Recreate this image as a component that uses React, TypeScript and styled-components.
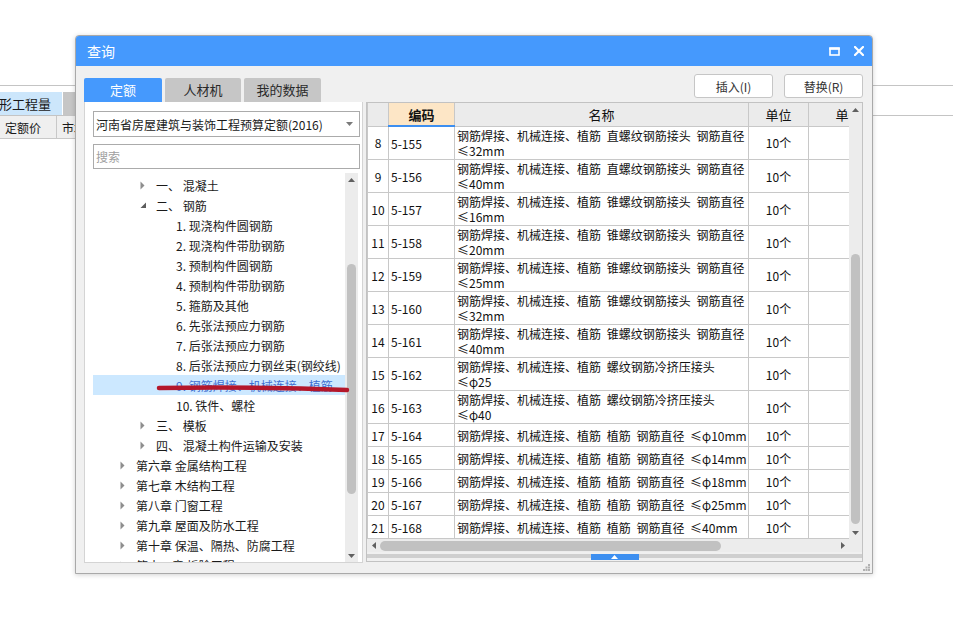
import React from 'react'
import styled, { createGlobalStyle } from 'styled-components'

const GlobalStyle = createGlobalStyle`
    html, body {
        margin: 0;
        padding: 0;
        background: #fff;
    }
    body {
        font-family: "Noto Sans CJK SC", "Noto Sans", sans-serif;
        color: #1a1a1a;
    }
`

const Page = styled.div`
    position: relative;
    width: 953px;
    height: 627px;
    overflow: hidden;
    background: #fff;
`

// app behind the dialog
const Backdrop = styled.div`
    padding-top: 85px;
`
const BackTabBar = styled.div`
    display: flex;
    padding-top: 6px;
    border-top: 1px solid #c4c4c4;
    border-bottom: 1px solid #c4c4c4;
`
const BackTab = styled.div<{ $active?: boolean }>`
    width: ${p => (p.$active ? '62px' : '40px')};
    height: 23px;
    margin-right: 1px;
    background: ${p => (p.$active ? '#cce6fb' : '#c6c6c6')};
    font-size: 13px;
    line-height: 23px;
    white-space: nowrap;
    overflow: hidden;
    text-indent: -1px;
`
const BackRow = styled.div`
    display: flex;
`
const BackCell = styled.div<{ $w: number }>`
    width: ${p => p.$w}px;
    height: 23px;
    flex-shrink: 0;
    background: #efefef;
    border-right: 1px solid #c8c8c8;
    border-bottom: 1px solid #c8c8c8;
    font-size: 12px;
    line-height: 23px;
    padding-left: 5px;
    box-sizing: border-box;
    white-space: nowrap;
    overflow: hidden;
`

// dialog window
const Dialog = styled.div`
    position: absolute;
    left: 75px;
    top: 35px;
    width: 798px;
    height: 539px;
    box-sizing: border-box;
    display: flex;
    flex-direction: column;
    background: #f0f0f0;
    border: 1px solid #a9a9a9;
    border-radius: 4px 4px 0 0;
    box-shadow: 0 1px 5px rgba(0, 0, 0, 0.18);
    overflow: hidden;
`
const TitleBar = styled.div`
    height: 30px;
    flex-shrink: 0;
    display: flex;
    align-items: center;
    justify-content: space-between;
    padding: 0 8px 0 11px;
    background: #4599fd;
    color: #fff;
    font-size: 14px;
`
const TitleButtons = styled.div`
    display: flex;
    align-items: center;
    gap: 14px;
`
const Body = styled.div`
    flex: 1;
    display: flex;
    flex-direction: column;
    padding: 0 9px 10px 8px;
    min-height: 0;
`
const Toolbar = styled.div`
    height: 36px;
    flex-shrink: 0;
    display: flex;
    justify-content: space-between;
`
const Tabs = styled.div`
    display: flex;
    align-items: flex-end;
    gap: 3px;
`
const Tab = styled.div<{ $active?: boolean; $w: number }>`
    width: ${p => p.$w}px;
    height: 24px;
    border-radius: 2px 2px 0 0;
    background: ${p => (p.$active ? '#4599fd' : '#c6c6c6')};
    color: ${p => (p.$active ? '#fff' : '#2a2a2a')};
    font-size: 13px;
    line-height: 24px;
    text-align: center;
`
const Actions = styled.div`
    display: flex;
    gap: 11px;
    padding-top: 8px;
`
const ActionButton = styled.button`
    width: 79px;
    height: 24px;
    padding: 0;
    background: #fff;
    border: 1px solid #c6c6c6;
    border-radius: 3px;
    font-family: "Noto Sans CJK SC", sans-serif;
    font-size: 12px;
    color: #333;
`
const Content = styled.div`
    flex: 1;
    display: flex;
    gap: 3px;
    min-height: 0;
    min-width: 0;
`

// left side
const LeftPanel = styled.div`
    width: 279px;
    height: 461px;
    flex-shrink: 0;
    box-sizing: border-box;
    display: flex;
    flex-direction: column;
    background: #fff;
    border: 1px solid #d4d4d4;
    border-top: none;
    padding: 9px 2px 0 8px;
`
const Select = styled.div`
    height: 26px;
    box-sizing: border-box;
    display: flex;
    align-items: center;
    justify-content: space-between;
    border: 1px solid #ababab;
    padding: 0 6px 0 2px;
    font-size: 12px;
    color: #1a1a1a;
`
const Search = styled.div`
    height: 25px;
    margin-top: 7px;
    box-sizing: border-box;
    border: 1px solid #ababab;
    padding-left: 2px;
    font-size: 12px;
    line-height: 23px;
    color: #a0a0a0;
`
const TreeArea = styled.div`
    position: relative;
    flex: 1;
    display: flex;
    margin-top: 4px;
    margin-right: 2px;
    min-height: 0;
    overflow: hidden;
`
const TreeList = styled.div`
    flex: 1;
    padding-top: 2px;
`
const TreeRow = styled.div<{ $level: number; $selected?: boolean }>`
    height: 20px;
    display: flex;
    align-items: center;
    padding-left: ${p => 27 + (p.$level - 1) * 20}px;
    background: ${p => (p.$selected ? '#cce8ff' : 'transparent')};
    color: ${p => (p.$selected ? '#3f6fd1' : '#1a1a1a')};
    font-size: 12px;
    white-space: nowrap;
`
const Toggle = styled.span`
    width: 16px;
    flex-shrink: 0;
    display: flex;
    align-items: center;
`
const Mark = styled.svg`
    position: absolute;
    left: 0;
    top: 0;
    pointer-events: none;
`

const ScrollTrack = styled.div<{ $horizontal?: boolean }>`
    flex-shrink: 0;
    display: flex;
    flex-direction: ${p => (p.$horizontal ? 'row' : 'column')};
    align-items: center;
    ${p => (p.$horizontal ? 'height: 13px; flex: 1; min-width: 0;' : 'width: 13px;')}
    background: #ececec;
`
const ScrollArrow = styled.div<{ $size: number }>`
    width: ${p => p.$size}px;
    height: ${p => p.$size}px;
    flex-shrink: 0;
    display: flex;
    align-items: center;
    justify-content: center;
`
const ScrollThumb = styled.div<{ $horizontal?: boolean; $start: number; $length: number }>`
    flex-shrink: 0;
    background: #c1c1c1;
    border-radius: 5px;
    ${p =>
        p.$horizontal
            ? `height: 10px; width: ${p.$length}px; margin-left: ${p.$start}px;`
            : `width: 9px; height: ${p.$length}px; margin-top: ${p.$start}px;`}
`
const Filler = styled.div`
    flex: 1;
`

// right side
const RightPanel = styled.div`
    flex: 1;
    min-width: 0;
    height: 460px;
    box-sizing: border-box;
    display: flex;
    flex-direction: column;
    border: 1px solid #c2c2c2;
    background: #f0f0f0;
`
const GridArea = styled.div`
    height: 436px;
    display: flex;
    background: #fff;
`
const GridClip = styled.div`
    flex: 1;
    min-width: 0;
    overflow: hidden;
`
const Grid = styled.table`
    width: 521px;
    table-layout: fixed;
    border-collapse: collapse;
    font-size: 12px;
    color: #111;
`
const HeadCell = styled.th<{ $sorted?: boolean }>`
    height: 22px;
    padding: 0;
    font-size: 13px;
    font-weight: ${p => (p.$sorted ? 700 : 400)};
    background: ${p => (p.$sorted ? '#fde6c6' : '#ebebeb')};
    border: 1px solid #c8c8c8;
    border-top: none;
    border-bottom: ${p => (p.$sorted ? '2px solid #3d8ff0' : '1px solid #c8c8c8')};
    text-align: center;
    white-space: nowrap;
    overflow: hidden;
`
const Cell = styled.td<{ $align?: string; $h: number }>`
    height: ${p => p.$h - 1}px;
    padding: 0 2px;
    border: 1px solid #c8c8c8;
    text-align: ${p => p.$align || 'left'};
    vertical-align: middle;
    line-height: 15px;
    white-space: nowrap;
    overflow: hidden;
    word-spacing: 3px;
`
const HScrollRow = styled.div`
    height: 13px;
    display: flex;
`
const Corner = styled.div`
    width: 13px;
    flex-shrink: 0;
    background: #ececec;
`
const Splitter = styled.div`
    height: 9px;
    display: flex;
    justify-content: center;
    align-items: flex-end;
    background: linear-gradient(#f0f0f0 0, #f0f0f0 2px, #cfcfcf 2px, #cfcfcf 6px, #f0f0f0 6px);
`
const SplitHandle = styled.div`
    width: 48px;
    height: 6px;
    margin-bottom: 1px;
    display: flex;
    justify-content: center;
    align-items: center;
    background: #3d8ff0;
`
const Grip = styled.svg`
    position: absolute;
    right: 2px;
    bottom: 2px;
`

const Tri = ({ dir, color = '#606060' }: { dir: 'up' | 'down' | 'left' | 'right'; color?: string }) => {
    const pts = {
        up: '0,4 3.5,0 7,4',
        down: '0,0 7,0 3.5,4',
        left: '4,0 4,7 0,3.5',
        right: '0,0 4,3.5 0,7',
    }[dir]
    const w = dir === 'up' || dir === 'down' ? 7 : 4
    const h = dir === 'up' || dir === 'down' ? 4 : 7
    return (
        <svg width={w} height={h} viewBox={`0 0 ${w} ${h}`}>
            <polygon points={pts} fill={color} />
        </svg>
    )
}

const Caret = ({ open }: { open?: boolean }) =>
    open ? (
        <svg width="7" height="7" viewBox="0 0 7 7">
            <polygon points="6,0.5 6,6 0.5,6" fill="#5c5c5c" />
        </svg>
    ) : (
        <svg width="5" height="9" viewBox="0 0 5 9">
            <polygon points="0.5,0.5 4.5,4.5 0.5,8.5" fill="#8e8e8e" />
        </svg>
    )

type Node = { level: number; text: string; toggle?: 'open' | 'closed'; selected?: boolean }

const tree: Node[] = [
    { level: 2, text: '一、 混凝土', toggle: 'closed' },
    { level: 2, text: '二、 钢筋', toggle: 'open' },
    { level: 3, text: '1. 现浇构件圆钢筋' },
    { level: 3, text: '2. 现浇构件带肋钢筋' },
    { level: 3, text: '3. 预制构件圆钢筋' },
    { level: 3, text: '4. 预制构件带肋钢筋' },
    { level: 3, text: '5. 箍筋及其他' },
    { level: 3, text: '6. 先张法预应力钢筋' },
    { level: 3, text: '7. 后张法预应力钢筋' },
    { level: 3, text: '8. 后张法预应力钢丝束(钢绞线)' },
    { level: 3, text: '9. 钢筋焊接、机械连接、植筋', selected: true },
    { level: 3, text: '10. 铁件、螺栓' },
    { level: 2, text: '三、 模板', toggle: 'closed' },
    { level: 2, text: '四、 混凝土构件运输及安装', toggle: 'closed' },
    { level: 1, text: '第六章 金属结构工程', toggle: 'closed' },
    { level: 1, text: '第七章 木结构工程', toggle: 'closed' },
    { level: 1, text: '第八章 门窗工程', toggle: 'closed' },
    { level: 1, text: '第九章 屋面及防水工程', toggle: 'closed' },
    { level: 1, text: '第十章 保温、隔热、防腐工程', toggle: 'closed' },
    { level: 1, text: '第十一章 拆除工程', toggle: 'closed' },
]

const base = '钢筋焊接、机械连接、植筋'
const zhi = `${base} 直螺纹钢筋接头 钢筋直径`
const zhui = `${base} 锥螺纹钢筋接头 钢筋直径`
const ji = `${base} 螺纹钢筋冷挤压接头`
const plant = `${base} 植筋 钢筋直径`

type Item = { n: number; code: string; name: string; more?: string }

const items: Item[] = [
    { n: 8, code: '5-155', name: zhi, more: '≤32mm' },
    { n: 9, code: '5-156', name: zhi, more: '≤40mm' },
    { n: 10, code: '5-157', name: zhui, more: '≤16mm' },
    { n: 11, code: '5-158', name: zhui, more: '≤20mm' },
    { n: 12, code: '5-159', name: zhui, more: '≤25mm' },
    { n: 13, code: '5-160', name: zhui, more: '≤32mm' },
    { n: 14, code: '5-161', name: zhui, more: '≤40mm' },
    { n: 15, code: '5-162', name: ji, more: '≤φ25' },
    { n: 16, code: '5-163', name: ji, more: '≤φ40' },
    { n: 17, code: '5-164', name: `${plant} ≤φ10mm` },
    { n: 18, code: '5-165', name: `${plant} ≤φ14mm` },
    { n: 19, code: '5-166', name: `${plant} ≤φ18mm` },
    { n: 20, code: '5-167', name: `${plant} ≤φ25mm` },
    { n: 21, code: '5-168', name: `${plant} ≤40mm` },
]

const App = () => {
    return (
        <Page>
            <GlobalStyle />
            <Backdrop>
                <BackTabBar>
                    <BackTab $active>形工程量</BackTab>
                    <BackTab />
                </BackTabBar>
                <BackRow>
                    <BackCell $w={57}>定额价</BackCell>
                    <BackCell $w={40}>市场价</BackCell>
                </BackRow>
            </Backdrop>

            <Dialog>
                <TitleBar>
                    <span>查询</span>
                    <TitleButtons>
                        <svg width="11" height="9" viewBox="0 0 11 9">
                            <rect x="1" y="1.5" width="9" height="6.5" fill="none" stroke="#fff" strokeWidth="1.6" />
                            <rect x="0.2" y="0.2" width="10.6" height="2.6" fill="#fff" />
                        </svg>
                        <svg width="10" height="10" viewBox="0 0 10 10">
                            <path d="M1 1 L9 9 M9 1 L1 9" stroke="#fff" strokeWidth="2.2" strokeLinecap="square" />
                        </svg>
                    </TitleButtons>
                </TitleBar>

                <Body>
                    <Toolbar>
                        <Tabs>
                            <Tab $active $w={78}>定额</Tab>
                            <Tab $w={76}>人材机</Tab>
                            <Tab $w={77}>我的数据</Tab>
                        </Tabs>
                        <Actions>
                            <ActionButton>插入(I)</ActionButton>
                            <ActionButton>替换(R)</ActionButton>
                        </Actions>
                    </Toolbar>

                    <Content>
                        <LeftPanel>
                            <Select>
                                <span>河南省房屋建筑与装饰工程预算定额(2016)</span>
                                <Tri dir="down" color="#7a7a7a" />
                            </Select>
                            <Search>搜索</Search>
                            <TreeArea>
                                <TreeList>
                                    {tree.map((node, i) => (
                                        <TreeRow key={i} $level={node.level} $selected={node.selected}>
                                            <Toggle>{node.toggle && <Caret open={node.toggle === 'open'} />}</Toggle>
                                            {node.text}
                                        </TreeRow>
                                    ))}
                                </TreeList>
                                <ScrollTrack>
                                    <ScrollArrow $size={13}>
                                        <Tri dir="up" />
                                    </ScrollArrow>
                                    <ScrollThumb $start={78} $length={230} />
                                    <Filler />
                                    <ScrollArrow $size={13}>
                                        <Tri dir="down" />
                                    </ScrollArrow>
                                </ScrollTrack>
                                <Mark width="270" height="230" viewBox="0 0 270 230">
                                    <path
                                        d="M66 215 Q160 213.5 254 217"
                                        fill="none"
                                        stroke="#b4172b"
                                        strokeWidth="4.5"
                                        strokeLinecap="round"
                                    />
                                </Mark>
                            </TreeArea>
                        </LeftPanel>

                        <RightPanel>
                            <GridArea>
                                <GridClip>
                                    <Grid>
                                        <colgroup>
                                            <col style={{ width: 21 }} />
                                            <col style={{ width: 66 }} />
                                            <col style={{ width: 294 }} />
                                            <col style={{ width: 60 }} />
                                            <col style={{ width: 80 }} />
                                        </colgroup>
                                        <thead>
                                            <tr>
                                                <HeadCell />
                                                <HeadCell $sorted>编码</HeadCell>
                                                <HeadCell>名称</HeadCell>
                                                <HeadCell>单位</HeadCell>
                                                <HeadCell>单价</HeadCell>
                                            </tr>
                                        </thead>
                                        <tbody>
                                            {items.map(item => {
                                                const h = item.more ? 33 : 23
                                                return (
                                                    <tr key={item.n}>
                                                        <Cell $h={h} $align="center">{item.n}</Cell>
                                                        <Cell $h={h}>{item.code}</Cell>
                                                        <Cell $h={h}>
                                                            {item.name}
                                                            {item.more && (
                                                                <>
                                                                    <br />
                                                                    {item.more}
                                                                </>
                                                            )}
                                                        </Cell>
                                                        <Cell $h={h} $align="center">10个</Cell>
                                                        <Cell $h={h} />
                                                    </tr>
                                                )
                                            })}
                                        </tbody>
                                    </Grid>
                                </GridClip>
                                <ScrollTrack>
                                    <ScrollArrow $size={13}>
                                        <Tri dir="up" />
                                    </ScrollArrow>
                                    <ScrollThumb $start={138} $length={270} />
                                    <Filler />
                                    <ScrollArrow $size={13}>
                                        <Tri dir="down" />
                                    </ScrollArrow>
                                </ScrollTrack>
                            </GridArea>
                            <HScrollRow>
                                <ScrollTrack $horizontal>
                                    <ScrollArrow $size={13}>
                                        <Tri dir="left" />
                                    </ScrollArrow>
                                    <ScrollThumb $horizontal $start={0} $length={341} />
                                    <Filler />
                                    <ScrollArrow $size={13}>
                                        <Tri dir="right" />
                                    </ScrollArrow>
                                </ScrollTrack>
                                <Corner />
                            </HScrollRow>
                            <Splitter>
                                <SplitHandle>
                                    <Tri dir="up" color="#fff" />
                                </SplitHandle>
                            </Splitter>
                        </RightPanel>
                    </Content>
                </Body>
                <Grip width="7" height="7" viewBox="0 0 7 7">
                    <rect x="5" y="0" width="2" height="2" fill="#b0b0b0" />
                    <rect x="2.5" y="2.5" width="2" height="2" fill="#b0b0b0" />
                    <rect x="5" y="2.5" width="2" height="2" fill="#b0b0b0" />
                    <rect x="0" y="5" width="2" height="2" fill="#b0b0b0" />
                    <rect x="2.5" y="5" width="2" height="2" fill="#b0b0b0" />
                    <rect x="5" y="5" width="2" height="2" fill="#b0b0b0" />
                </Grip>
            </Dialog>
        </Page>
    )
}

export default App
